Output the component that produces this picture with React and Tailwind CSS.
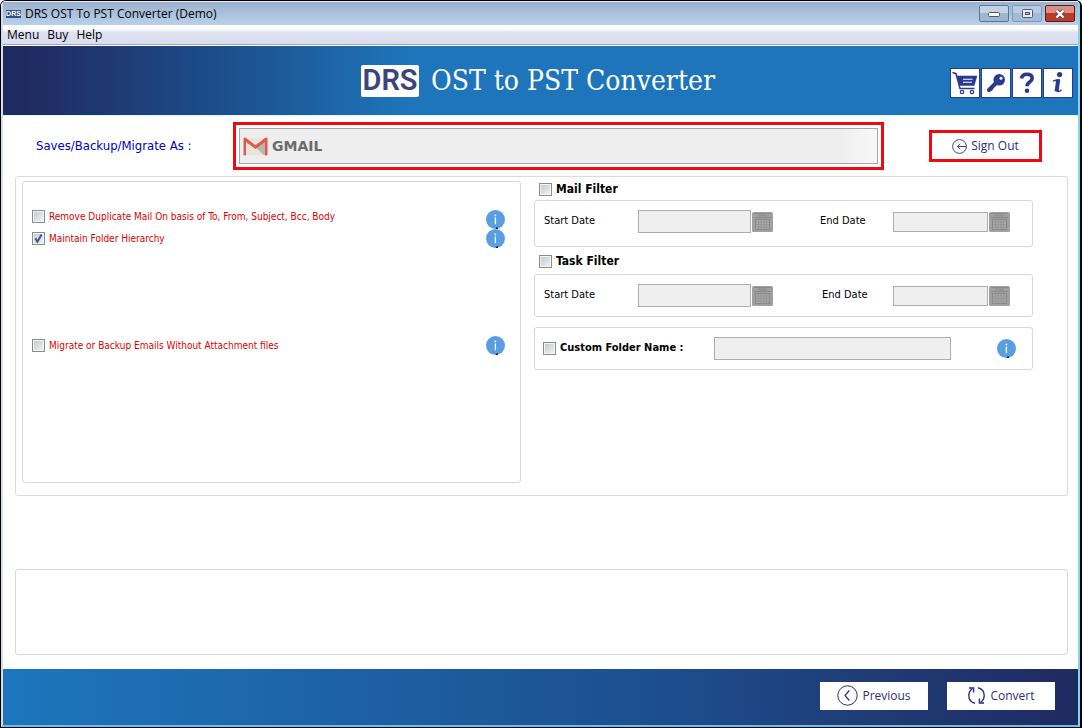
import React, { useState } from 'react';

const TAHOMA = "font-['DejaVu_Sans_Condensed','DejaVu_Sans',sans-serif]";
const SEGOE = "font-['Open_Sans','Noto_Sans',sans-serif]";

function Checkbox({ id, checked, onChange }) {
  return (
    <span className="relative flex w-[13px] h-[13px] shrink-0">
      <input
        id={id}
        type="checkbox"
        checked={checked}
        onChange={(e) => onChange(e.target.checked)}
        className="peer appearance-none w-[13px] h-[13px] border border-[#8a8d8d] bg-linear-to-br from-[#c4c8cc] to-[#f4f4f4] shadow-[inset_0_0_0_1px_#f4f4f4]"
      />
      <svg className="absolute inset-0 hidden peer-checked:block pointer-events-none" width="13" height="13" viewBox="0 0 13 13" fill="none">
        <path d="M3.4 6.2l2 3.6L9.6 2.6" stroke="#3b5a94" strokeWidth="2" />
      </svg>
    </span>
  );
}

function InfoButton({ label }) {
  return (
    <button type="button" aria-label={label} className="shrink-0">
      <svg className="block" width="19" height="19" viewBox="0 0 19 19">
        <circle cx="9.5" cy="9.5" r="9.5" fill="#5a9ee2" />
        <circle cx="9.4" cy="5.4" r="0.9" fill="#fff" />
        <path d="M9.4 7.6v6.6" stroke="#fff" strokeWidth="1.3" />
        <path d="M10 17.6h2v1.4h-2z" fill="#0b1a33" />
      </svg>
    </button>
  );
}

function CalendarButton({ label }) {
  return (
    <button type="button" aria-label={label} className="shrink-0">
      <svg className="block" width="21" height="20" viewBox="0 0 21 20">
        <rect width="21" height="20" rx="1.5" fill="#a0a0a0" />
        <path d="M2 1.5h17M2 5.5h17" stroke="#8a8a8a" />
        <rect x="6" y="2.5" width="9" height="2" fill="#929292" />
        <rect x="3.5" y="7.5" width="14" height="10" fill="#a9a9a9" stroke="#8a8a8a" />
        <path d="M4 10h13M4 12.5h13M4 15h13M6.5 8v9M9 8v9M12 8v9M14.5 8v9" stroke="#929292" strokeWidth="0.8" />
      </svg>
    </button>
  );
}

function Option({ id, label, checked, onChange, align }) {
  return (
    <div className={`flex justify-between ${align}`}>
      <div className="flex items-center gap-1">
        <Checkbox id={id} checked={checked} onChange={onChange} />
        <label htmlFor={id} className="text-[10px] leading-[13px] text-[#e00000]">{label}</label>
      </div>
      <InfoButton label={`About: ${label}`} />
    </div>
  );
}

function DateRange({ name, boxClass, endClass }) {
  return (
    <div className={`flex items-center justify-between border border-[#d6d9dc] rounded-[3px] pl-[9px] pr-[22px] text-[11px] ${boxClass}`}>
      <div className="flex items-center">
        <label htmlFor={`${name}-start`} className="w-[94px]">Start Date</label>
        <input id={`${name}-start`} type="text" disabled className="w-[113px] h-[23px] border border-[#abadb3] bg-[#efefef] mr-px" />
        <CalendarButton label="Pick start date" />
      </div>
      <div className="flex items-center">
        <label htmlFor={`${name}-end`} className={endClass}>End Date</label>
        <input id={`${name}-end`} type="text" disabled className="w-[95px] h-5 border border-[#abadb3] bg-[#efefef] mr-px" />
        <CalendarButton label="Pick end date" />
      </div>
    </div>
  );
}

function FilterHeading({ id, label, checked, onChange, className }) {
  return (
    <div className={`flex items-center gap-1 h-4 pl-[5px] ${className}`}>
      <Checkbox id={id} checked={checked} onChange={onChange} />
      <label htmlFor={id} className="text-xs font-bold">{label}</label>
    </div>
  );
}

function ToolButton({ label, children }) {
  return (
    <button type="button" aria-label={label} className="w-[30px] h-[30px] flex items-center justify-center bg-white border border-[#2b3990] text-[#2b3990]">
      {children}
    </button>
  );
}

export default function App() {
  const [options, setOptions] = useState({
    duplicate: false,
    hierarchy: true,
    attachment: false,
    mail: false,
    task: false,
    folder: false,
  });
  const set = (key) => (value) => setOptions((o) => ({ ...o, [key]: value }));

  return (
    <div className={`min-h-screen flex flex-col border border-r-2 border-black rounded-t-md overflow-hidden bg-white text-black ${TAHOMA}`}>
      <div className="flex-1 flex flex-col border-l-2 border-r-2 border-b-2 border-l-[#d5deea] border-r-[#6fdcf2] border-b-[#6cbfe6]">
        {/* Title bar */}
        <div className={`h-6 flex items-center justify-between pl-[3px] pr-[3px] bg-linear-to-b from-[#9cb2cd] to-[#b9d0ea] border-t border-white/60 ${SEGOE}`}>
          <div className="flex items-center gap-1">
            <span className="w-[15px] h-2 flex items-center justify-center bg-[#33507f] text-white text-[7px] leading-none font-bold font-['Liberation_Sans',sans-serif]">DRS</span>
            <span className="text-xs">DRS OST To PST Converter (Demo)</span>
          </div>
          <div className="flex gap-[3px]">
            <button type="button" aria-label="Minimize" className="w-[30px] h-[17px] flex items-center justify-center rounded-xs border border-[#60738f] bg-linear-to-b from-[#c3d3e6] from-50% to-[#9fb6d2] to-50%">
              <svg width="12" height="6" viewBox="0 0 12 6"><rect x="0.5" y="1.5" width="11" height="4" rx="1" fill="#fff" stroke="#535666" /></svg>
            </button>
            <button type="button" aria-label="Maximize" className="w-[30px] h-[17px] flex items-center justify-center rounded-xs border border-[#8398b5] bg-linear-to-b from-[#b7cbe3] from-50% to-[#a3bbd8] to-50%">
              <svg width="11" height="9" viewBox="0 0 11 9">
                <rect x="0.5" y="0.5" width="10" height="8" rx="1" fill="#e8edf4" stroke="#535666" />
                <rect x="3.5" y="3.5" width="4" height="2" fill="#a9bdd6" stroke="#535666" />
              </svg>
            </button>
            <button type="button" aria-label="Close" className="w-[30px] h-[17px] flex items-center justify-center rounded-xs border border-[#5a1a1a] bg-linear-to-b from-[#dd9081] from-50% to-[#bd3a28] to-50%">
              <svg width="12" height="10" viewBox="0 0 12 10">
                <path d="M2.5 1.5l7 7M9.5 1.5l-7 7" stroke="#535666" strokeWidth="4" />
                <path d="M2.5 1.5l7 7M9.5 1.5l-7 7" stroke="#fff" strokeWidth="2.2" />
              </svg>
            </button>
          </div>
        </div>

        {/* Menu bar */}
        <nav className={`h-5 flex items-center gap-2 pl-1 text-xs bg-linear-to-b from-white from-20% via-[#dde1f1] via-40% to-[#d9def0] border-b border-[#a5a5a5] ${SEGOE}`}>
          <button type="button">Menu</button>
          <button type="button">Buy</button>
          <button type="button">Help</button>
        </nav>

        {/* Banner */}
        <header className="h-[70px] grid grid-cols-[1fr_auto_1fr] items-center border-t border-white pr-[5px] bg-linear-to-r from-[#1f2a60] from-2% via-[#1b4a86] via-18% to-[#1e75bb] to-38%">
          <div />
          <div className="flex items-center gap-3">
            <div className="w-[58px] h-8 flex items-center justify-center rounded-xs bg-white text-[#3a4580] text-[29px] leading-none font-semibold font-['Roboto',sans-serif]">DRS</div>
            <h1 className="text-[28px] leading-8 text-white whitespace-nowrap font-['DejaVu_Serif_Condensed','DejaVu_Serif',serif]">OST to PST Converter</h1>
          </div>
          <div className="flex justify-end gap-px pt-1">
            <ToolButton label="Buy">
              <svg width="26" height="24" viewBox="0 0 26 24" fill="none" stroke="currentColor">
                <path d="M0.5 1.5l3.5 1.2L8 17.5h14.5" strokeWidth="1.5" />
                <path d="M5 5h20l-2.8 9.5H7.6z" fill="currentColor" strokeWidth="0.5" />
                <path d="M11 8.2h9.500M11 11.2h9" stroke="#fff" strokeWidth="1.1" />
                <circle cx="10" cy="21" r="1.7" strokeWidth="1.2" />
                <circle cx="20" cy="21" r="1.7" strokeWidth="1.2" />
              </svg>
            </ToolButton>
            <ToolButton label="Activate">
              <svg width="20" height="20" viewBox="0 0 20 20" fill="none" stroke="currentColor">
                <path d="M10.5 9.5L3 17" strokeWidth="4" strokeLinecap="round" />
                <path d="M4.5 15l2 2" strokeWidth="2.5" />
                <circle cx="13.2" cy="6.8" r="5.8" fill="currentColor" stroke="none" />
                <circle cx="15" cy="5.2" r="1.5" fill="#fff" stroke="none" />
              </svg>
            </ToolButton>
            <ToolButton label="Help">
              <svg width="16" height="22" viewBox="0 0 16 22" fill="none" stroke="currentColor">
                <path d="M2.5 6.4C2.9 3.3 5 2.2 8 2.2c3.2 0 5.2 1.5 5.2 4 0 4-5.2 3.600-5.2 8" strokeWidth="3.6" />
                <circle cx="8" cy="18.7" r="2.3" fill="currentColor" stroke="none" />
              </svg>
            </ToolButton>
            <ToolButton label="About">
              <svg width="14" height="24" viewBox="0 0 14 24" fill="none" stroke="currentColor">
                <circle cx="8.6" cy="3.6" r="2.6" fill="currentColor" stroke="none" />
                <path d="M2 10.2c2.2-.9 4-1.2 6-1.4L6 18.6c-.5 2.6 2.2 2.4 4.5.2" strokeWidth="1.4" />
                <path d="M7.2 8.8L5.6 20.400" strokeWidth="4" />
              </svg>
            </ToolButton>
          </div>
        </header>

        <main className="flex-1 flex flex-col border-t border-[#d8fbff] pt-1.5 pl-3 pr-2.5 pb-3.5">
          <div className="flex items-center h-12 pl-[21px] pr-[26px]">
            <label htmlFor="save-as" className="w-[197px] shrink-0 text-[13px] text-[#0000c8]">Saves/Backup/Migrate As :</label>
            <div className="flex-1 border-3 border-[#ee0a10] p-[3px]">
              <div className="h-9 flex items-center gap-1 pl-[3px] border border-[#a3a5ab] bg-linear-to-r from-[#eeeeee] from-94% to-[#f8f8f8]">
                <svg className="shrink-0" width="25" height="19" viewBox="0 0 25 19">
                  <path d="M2 1h21v17H2z" fill="#e9e5d6" />
                  <path d="M12.5 10L23 2v16h-2.5z" fill="#b9b6ab" />
                  <path d="M0.5 2v15.5a1 1 0 001 1H3V5l9.5 7L22 5v13.500h1.500a1 1 0 001-1V2c0-1.500-1.500-1.800-2.500-1L12.500 8.200 3 1C2 .2.5.5.5 2z" fill="#de5a4e" />
                </svg>
                <select id="save-as" disabled className="appearance-none flex-1 text-sm font-bold font-['DejaVu_Sans',sans-serif] text-[#6b6b6b] opacity-100">
                  <option>GMAIL</option>
                </select>
              </div>
            </div>
            <button type="button" className={`ml-[45px] w-[113px] h-8 flex items-center justify-center gap-1 border-3 border-[#ee0a10] bg-white text-xs text-[#2a2f7c] ${SEGOE}`}>
              <svg width="15" height="15" viewBox="0 0 15 15" fill="none" stroke="currentColor" strokeWidth="0.9">
                <circle cx="7.500" cy="7.500" r="6.900" />
                <path d="M14 7.500H5.500M8.200 4.800L5.500 7.500l2.700 2.700" />
              </svg>
              Sign Out
            </button>
          </div>

          <section className="mt-1.5 grid grid-cols-2 gap-[13px] border border-[#dadde0] rounded-[3px] pt-1 pb-3 pl-1.5 pr-[34px]">
            <div className="min-h-[302px] border border-[#d6d9dc] rounded-[3px] pt-7 pl-[9px] pr-[15px]">
              <Option id="duplicate" label="Remove Duplicate Mail On basis of To, From, Subject, Bcc, Body" checked={options.duplicate} onChange={set('duplicate')} align="items-start" />
              <Option id="hierarchy" label="Maintain Folder Hierarchy" checked={options.hierarchy} onChange={set('hierarchy')} align="items-center" />
              <div className="mt-22">
                <Option id="attachment" label="Migrate or Backup Emails Without Attachment files" checked={options.attachment} onChange={set('attachment')} align="items-center" />
              </div>
            </div>

            <div>
              <FilterHeading id="mail-filter" label="Mail Filter" checked={options.mail} onChange={set('mail')} className="mb-[3px]" />
              <DateRange name="mail" boxClass="h-[47px] pb-1" endClass="w-[73px]" />
              <FilterHeading id="task-filter" label="Task Filter" checked={options.task} onChange={set('task')} className="mt-1.5 mb-[5px]" />
              <DateRange name="task" boxClass="h-[43px]" endClass="w-[71px]" />

              <div className="mt-2.5 h-[43px] flex items-center border border-[#d6d9dc] rounded-[3px] pl-2 pr-4">
                <div className="flex items-center gap-1 w-[171px]">
                  <Checkbox id="custom-folder" checked={options.folder} onChange={set('folder')} />
                  <label htmlFor="custom-folder" className="text-[11px] font-bold">Custom Folder Name :</label>
                </div>
                <input type="text" disabled aria-label="Custom folder name" className="w-[237px] h-[23px] border border-[#abadb3] bg-[#efefef] mr-auto" />
                <InfoButton label="About custom folder name" />
              </div>
            </div>
          </section>

          <section aria-label="Progress" className="mt-[73px] flex-1 min-h-20 border border-[#d6d9dc] rounded-[3px]" />
        </main>

        <footer className={`h-14 flex justify-end items-center gap-[19px] pr-[23px] pb-[3px] bg-linear-to-r from-[#1d76bc] via-[#1c4f90] via-60% to-[#1f2a60] text-xs text-[#2a2f7c] ${SEGOE}`}>
          <button type="button" className="w-[108px] h-7 flex items-center justify-center gap-1 bg-white">
            <svg width="21" height="21" viewBox="0 0 21 21" fill="none" stroke="currentColor">
              <circle cx="10.500" cy="10.500" r="9.700" />
              <path d="M12.300 5.500l-4.300 5 4.300 5" strokeWidth="1.200" />
            </svg>
            Previous
          </button>
          <button type="button" className="w-[108px] h-7 flex items-center justify-center gap-1 bg-white">
            <svg width="19" height="19" viewBox="0 0 19 19" fill="none" stroke="currentColor" strokeWidth="1.400">
              <path d="M8 17.300C4 16.300 1.800 13 1.800 9.500c0-3 1.300-5.200 3.400-6.800" />
              <path d="M2 2h4.600v4.600" />
              <path d="M11 1.700c4 1 6.200 4.300 6.200 7.800 0 3-1.300 5.200-3.400 6.800" />
              <path d="M17 17h-4.600v-4.600" />
            </svg>
            Convert
          </button>
        </footer>
      </div>
    </div>
  );
}
